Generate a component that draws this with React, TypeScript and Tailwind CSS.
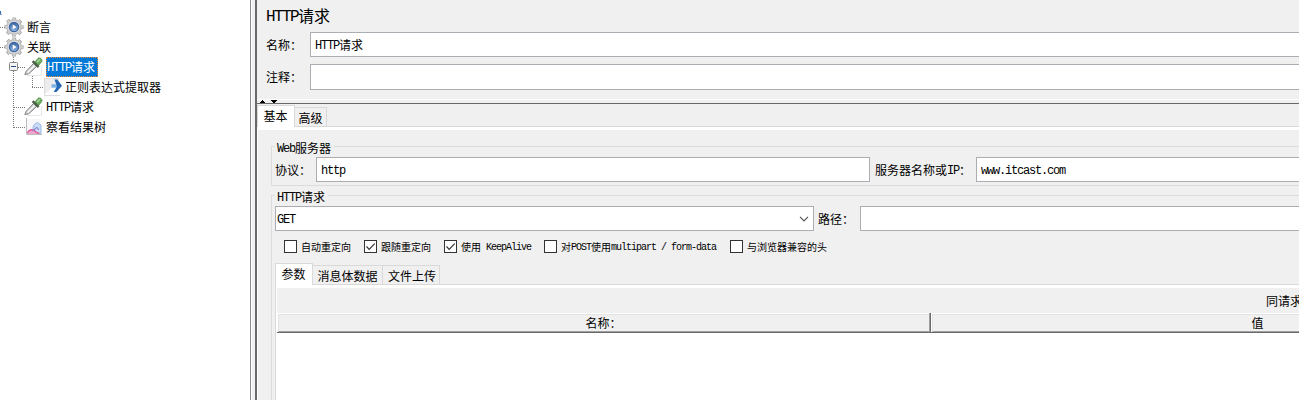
import React from "react";

const LATIN =
  "relative -top-px font-['Liberation_Mono'] text-[1em] leading-[0] tracking-[-0.1em]";

function T({ children }: { children: string }) {
  const parts = children.match(/[\x20-\x7e]+|[^\x20-\x7e]+/g) ?? [];
  return (
    <span className="whitespace-pre">
      {parts.map((p, i) =>
        /^[\x20-\x7e]/.test(p) ? (
          <span key={i} className={LATIN}>{p}</span>
        ) : (
          <span key={i}>{p}</span>
        ),
      )}
    </span>
  );
}

function Gear() {
  return (
    <svg width="20" height="20" viewBox="0 0 20 20" className="shrink-0">
      <defs>
        <linearGradient id="core" x1="0" y1="0" x2="0" y2="1">
          <stop offset="0" stopColor="#3a639f" />
          <stop offset="1" stopColor="#8db4e0" />
        </linearGradient>
      </defs>
      <circle cx="10" cy="10" r="8.3" fill="none" stroke="#a3a3a3" strokeWidth="2.6" strokeDasharray="3.6 2.92" strokeDashoffset="1.8" />
      <circle cx="10" cy="10" r="7.4" fill="#d2d2d2" stroke="#a8a8a8" strokeWidth=".8" />
      <circle cx="10" cy="10" r="7.9" fill="none" stroke="#d2d2d2" strokeWidth="1.9" strokeDasharray="2.4 3.8" strokeDashoffset="1.2" />
      <circle cx="10" cy="10" r="5.8" fill="#eceff4" />
      <circle cx="10" cy="10" r="4.7" fill="url(#core)" stroke="#3e66a3" strokeWidth="1.2" />
      <path d="M8.7 7.6v4.8l3.8-2.4z" fill="#fff" />
    </svg>
  );
}

function Dropper() {
  return (
    <svg width="20" height="20" viewBox="0 0 20 20" className="shrink-0">
      <path d="M17.500 9v9.500H3" fill="none" stroke="#e8e8e8" />
      <path d="M.8 17.600 2.200 14.200 9.600 6.400l3 3-7.800 7.400z" fill="#cfd2d2" stroke="#858585" strokeWidth="1" />
      <path d="M3.500 15.500 10.500 8.500" stroke="#fff" strokeWidth="1.200" />
      <path d="m10.600 5.300 3.400-3.900c2-1.600 5 1.200 3.600 3.400L14.200 8.800z" fill="#6cae5d" stroke="#4b8741" strokeWidth=".8" />
      <path d="m13.200 5 2.600-2.700" stroke="#a6d59b" strokeWidth="1.600" />
      <path d="m8.600 4.200 6 6" stroke="#4c5f48" strokeWidth="2.400" />
    </svg>
  );
}

function ArrowDoc() {
  return (
    <svg width="20" height="20" viewBox="0 0 20 20" className="shrink-0">
      <path d="M1 1h15v17H1z" fill="#ececef" />
      <path d="M1 18 16 4v14z" fill="#fff" />
      <path d="M1.500 1v17.500H17M1 1.500h15" fill="none" stroke="#dcdcdc" />
      <path d="M8.500 9h6" stroke="#7db1e6" strokeWidth="3.400" />
      <path d="M11.500 2.500h2.800l4.700 6.300-5.500 6.200h-2.800L14 9.500z" fill="#2468b6" />
    </svg>
  );
}

function Chart() {
  return (
    <svg width="18" height="18" viewBox="0 0 18 18" className="shrink-0">
      <path d="M1 1h15v15H1z" fill="#f7f7f9" />
      <path d="M8 10c0-3 2-4.500 4.500-5.500l3.500 2.500v9H9z" fill="#c9dcf6" stroke="#94b4e2" strokeWidth=".9" />
      <path d="M2 16c2-3.500 4.500-5.500 7-4l5 4z" fill="#eda6cc" />
      <path d="M2 15.200c2.500-4 4.500-4 6.500-3s3 3.300 6 3.300" fill="none" stroke="#dc5c9d" strokeWidth="1.400" />
      <path d="M7 12.500c2 0 3-1.500 4-2.500s2.500.5 2.500 2" fill="none" stroke="#8d84d0" strokeWidth="1.100" />
      <path d="M1.500 0v16.500H17" fill="none" stroke="#bdbdbd" />
    </svg>
  );
}

function Tree() {
  return (
    <aside className="relative h-full w-[250px] shrink-0 bg-white pt-[17px]">
      <svg width="60" height="140" className="absolute left-0 top-0">
        <g stroke="#777" strokeDasharray="1 1" fill="none">
          <path d="M0 27.5h6M0 47.5h6M13.5 57v71M14 67.5h11M14 107.5h11M14 127.5h11M32.5 76v11M32 87.5h11" />
        </g>
        <path d="M0 14.500h2" stroke="#7fa4d6" />
        <path d="M.5 11v3" stroke="#3567b0" />
        <rect x="9.5" y="62.5" width="8" height="8" rx="1" fill="#f5f5f5" stroke="#858585" />
        <path d="M11 66.5h5" stroke="#2a4785" />
      </svg>
      <div className="relative flex h-5 items-center gap-[3px] pl-[4px]"><Gear /><T>断言</T></div>
      <div className="relative flex h-5 items-center gap-[3px] pl-[4px]"><Gear /><T>关联</T></div>
      <div className="relative flex h-5 items-center gap-[2px] pl-[24px]">
        <Dropper />
        <span className="flex h-5 w-[52px] items-center border border-dotted border-[#ff8728] bg-[#0078d7] text-white"><T>HTTP请求</T></span>
      </div>
      <div className="relative flex h-5 items-center gap-[2px] pl-[43px]"><ArrowDoc /><T>正则表达式提取器</T></div>
      <div className="relative flex h-5 items-center gap-[2px] pl-[24px]"><Dropper /><T>HTTP请求</T></div>
      <div className="relative flex h-5 items-center gap-[3px] pl-[25px]"><Chart /><T>察看结果树</T></div>
    </aside>
  );
}

function Field({ className, children }: { className: string; children?: string }) {
  return (
    <div className={`flex shrink-0 items-center border border-[#abadb3] bg-white pl-[4px] ${className}`}>
      {children && <T>{children}</T>}
    </div>
  );
}

function Check({ label, on, className }: { label: string; on?: boolean; className: string }) {
  return (
    <label className={`flex shrink-0 items-center gap-[4px] text-[10px] ${className}`}>
      <svg width="13" height="13" viewBox="0 0 13 13" className="shrink-0">
        <rect x=".5" y=".5" width="12" height="12" fill="#fff" stroke="#333" />
        {on && <path d="m2.500 6.500 2.700 2.800L10.700 3.700" fill="none" stroke="#333" strokeWidth="1.200" />}
      </svg>
      <T>{label}</T>
    </label>
  );
}

function Legend({ children }: { children: string }) {
  return (
    <span className="absolute -top-[7px] left-[3px] flex h-4 items-center bg-[#f0f0f0] pl-[2px] pr-[3px]">
      <T>{children}</T>
    </span>
  );
}

export default function App() {
  return (
    <div className="flex h-[400px] w-[1299px] overflow-hidden bg-[#f0f0f0] font-['Noto_Sans_CJK_SC',sans-serif] text-[12px] leading-none text-black">
      <Tree />
      <div className="flex w-[7px] shrink-0 border-l border-r-2 border-l-[#8c8c94] border-r-[#696969]">
        <span className="w-px bg-white" />
      </div>

      <main className="flex w-[1042px] shrink-0 flex-col overflow-hidden">
        <h1 className="flex h-[32px] shrink-0 items-center pb-[3px] pl-[9px] text-[16px]"><T>HTTP请求</T></h1>
        <div className="flex h-[25px] shrink-0 items-center pl-[9px]">
          <span className="w-[44px] shrink-0"><T>名称：</T></span>
          <Field className="h-[25px] w-[1000px]">HTTP请求</Field>
        </div>
        <div className="mt-[7px] flex h-[26px] shrink-0 items-center pl-[9px]">
          <span className="w-[44px] shrink-0"><T>注释：</T></span>
          <Field className="h-[26px] w-[1000px]" />
        </div>
        <div className="mt-[9px] h-[5px] shrink-0 border-b border-t border-b-[#696969] border-t-white">
          <svg width="24" height="3" viewBox="0 0 24 3" className="block" shapeRendering="crispEdges">
            <path d="M5 0h1v1h1v1h1v1H3V2h1V1h1zM14 0h6v1h-1v1h-1v1h-2V2h-1V1h-1z" />
          </svg>
        </div>

        <nav className="mt-px flex h-[22px] shrink-0 items-end">
          <span className="flex h-[22px] w-[38px] items-center justify-center border border-b-0 border-[#d9d9d9] bg-white pb-px pr-px"><T>基本</T></span>
          <span className="flex h-[20px] w-[32px] items-center justify-center border border-l-0 border-[#d9d9d9] pt-[2px]"><T>高级</T></span>
          <span className="grow border-b border-[#d9d9d9]" />
        </nav>
        <div className="flex min-h-0 flex-1 flex-col border-l border-t-[3px] border-white pl-[13px]">
          <section className="relative mt-[16px] h-[40px] w-[1100px] shrink-0 border border-[#dcdcdc]">
            <Legend>Web服务器</Legend>
            <div className="mt-[10px] flex h-[25px] items-center pl-[3px]">
              <span className="w-[41px] shrink-0"><T>协议：</T></span>
              <Field className="h-[25px] w-[554px]">http</Field>
              <span className="w-[106px] shrink-0 pl-[5px]"><T>服务器名称或IP：</T></span>
              <Field className="h-[25px] w-[500px]">www.itcast.com</Field>
            </div>
          </section>

          <section className="relative mt-[9px] flex h-[300px] w-[1100px] shrink-0 flex-col border border-[#dcdcdc] pl-[3px]">
            <Legend>HTTP请求</Legend>
            <div className="mt-[10px] flex h-[25px] shrink-0 items-center">
              <div className="flex h-[25px] w-[539px] shrink-0 items-center justify-between border border-[#abadb3] bg-white pl-px pr-[4px]">
                <T>GET</T>
                <svg width="10" height="6" viewBox="0 0 10 6"><path d="m1 .8 4 4 4-4" fill="none" stroke="#555" strokeWidth="1.2" /></svg>
              </div>
              <span className="w-[46px] shrink-0 pl-[4px]"><T>路径：</T></span>
              <Field className="h-[25px] w-[500px]" />
            </div>
            <div className="mt-[9px] flex h-[13px] shrink-0 items-center pl-[9px]">
              <Check className="w-[80px]" label="自动重定向" />
              <Check className="w-[80px]" label="跟随重定向" on />
              <Check className="w-[100px]" label="使用 KeepAlive" on />
              <Check className="w-[186px]" label="对POST使用multipart / form-data" />
              <Check className="w-[110px]" label="与浏览器兼容的头" />
            </div>
            <nav className="mt-[10px] flex h-[22px] shrink-0 items-end">
              <span className="flex h-[22px] w-[38px] items-center justify-center border border-b-0 border-[#d9d9d9] bg-white pb-px pr-px"><T>参数</T></span>
              <span className="flex h-[20px] w-[70px] items-center justify-center border border-l-0 border-[#d9d9d9] pt-[2px]"><T>消息体数据</T></span>
              <span className="flex h-[20px] w-[57px] items-center justify-center border border-l-0 border-[#d9d9d9] pl-[2px] pt-[2px]"><T>文件上传</T></span>
              <span className="grow border-b border-[#d9d9d9]" />
            </nav>
            <div className="flex min-h-0 flex-1 flex-col border-l border-[#d9d9d9] bg-white pl-px pt-[3px]">
              <div className="flex h-[25px] shrink-0 items-center bg-[#f0f0f0] pl-[989px]"><T>同请求</T></div>
              <div className="mt-px flex h-[19px] shrink-0 border-b border-[#696969]">
                <div className="ml-px flex w-[651px] shrink-0 items-center justify-center border-b border-l border-t border-b-[#a0a0a0] border-l-[#e3e3e3] border-t-[#e3e3e3] bg-[#f0f0f0] pr-px"><T>名称：</T></div>
                <div className="-mt-px w-[2px] shrink-0 border-l border-l-[#a0a0a0] bg-[#696969]" />
                <div className="ml-px flex w-[652px] shrink-0 items-center justify-center border-b border-l border-t border-b-[#a0a0a0] border-l-[#e3e3e3] border-t-[#e3e3e3] bg-[#f0f0f0] pr-[2px]"><T>值</T></div>
              </div>
            </div>
          </section>
        </div>
      </main>
    </div>
  );
}
